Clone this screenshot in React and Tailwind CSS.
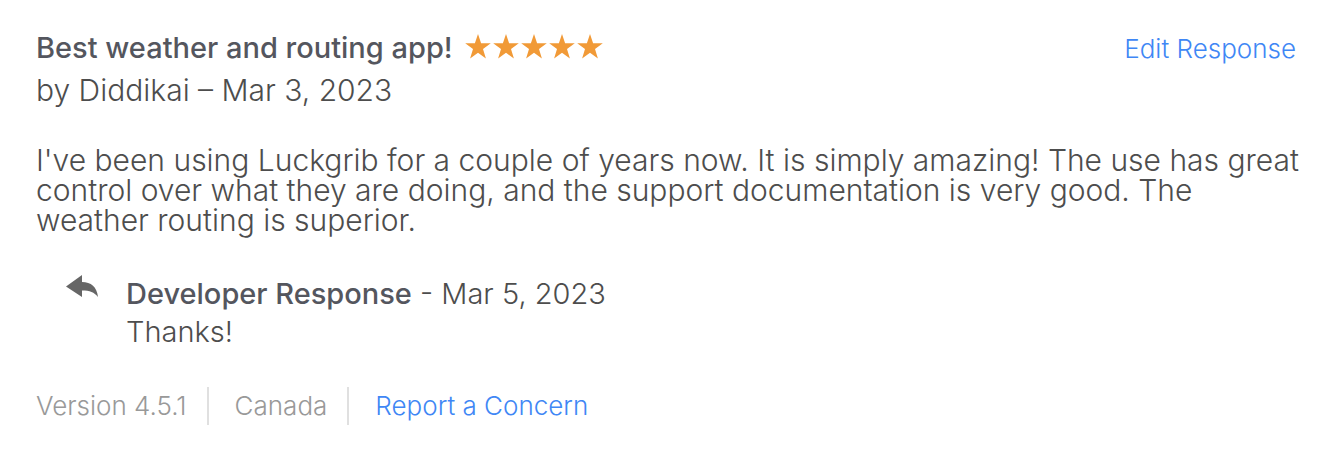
const STAR = 'M13 0 L16.1 9.2 H25.8 L18 15 L20.9 24.4 L13 18.8 L5.1 24.4 L8 15 L0.2 9.2 H9.9 Z';

function Stars({ count }) {
  return (
    <span role="img" aria-label={`${count} stars`} className="flex gap-0.5 text-[#f19a37]">
      {Array.from({ length: count }, (_, i) => (
        <svg key={i} viewBox="0 0 26 28" className="h-7 w-[26px]" fill="currentColor">
          <path d={STAR} />
        </svg>
      ))}
    </span>
  );
}

function ReplyIcon() {
  return (
    <svg viewBox="0 0 32 22" className="h-[22px] w-8 text-[#666]" fill="currentColor" aria-hidden="true">
      <path d="M0 11.5 L16 0 V7 C25 7 31 12 32 22 C28 17 24 15.5 16 15.5 V22 Z" />
    </svg>
  );
}

export default function App() {
  return (
    <article className="bg-white py-7 pr-7 pl-9 font-['Inter',sans-serif] text-[29px] leading-[30px] font-light text-[#4d4d4d] [font-optical-sizing:none]">
      <header className="flex items-start justify-between pr-2.5">
        <div>
          <div className="flex h-10 items-center gap-3">
            <h2 className="font-medium text-[#54565e]">Best weather and routing app!</h2>
            <Stars count={5} />
          </div>
          <p className="mt-[7px] text-[30px]">by Diddikai – Mar 3, 2023</p>
        </div>
        <button type="button" className="h-[42px] text-[26px] text-[#3f87f5]">Edit Response</button>
      </header>

      <p className="mt-10 text-[30px]">
        I've been using Luckgrib for a couple of years now. It is simply amazing! The use has great control over what
        they are doing, and the support documentation is very good. The weather routing is superior.
      </p>

      <section className="mt-10 flex gap-7 pl-[30px]">
        <ReplyIcon />
        <div className="leading-[38px]">
          <p>
            <strong className="font-medium text-[#54565e]">Developer Response</strong> - Mar 5, 2023
          </p>
          <p>Thanks!</p>
        </div>
      </section>

      <footer className="mt-[37px] flex h-9 items-center text-[26px] leading-[38px] text-[#999]">
        <span className="pr-5">Version 4.5.1</span>
        <span className="border-x-2 border-[#e0e0e0] pr-5 pl-[26px]">Canada</span>
        <button type="button" className="pl-[26px] text-[#3f87f5]">Report a Concern</button>
      </footer>
    </article>
  );
}
